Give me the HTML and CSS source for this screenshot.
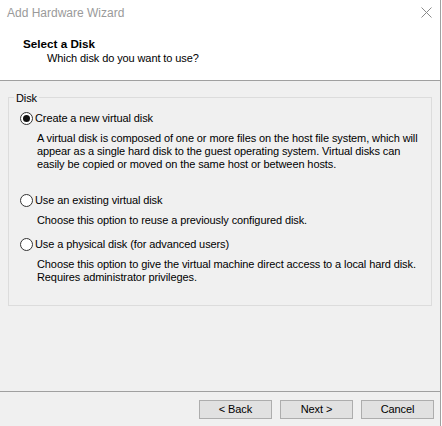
FILE: index.html
```html
<!DOCTYPE html>
<html>
<head>
<meta charset="utf-8">
<title>Add Hardware Wizard</title>
<link rel="stylesheet" href="styles.css">
</head>
<body>
<div class="window">
  <div class="top">
    <div class="titlebar">
      <span class="title">Add Hardware Wizard</span>
      <svg class="close" width="11" height="11" viewBox="0 0 11 11"><path d="M0.5 0.5L10.5 10.5M10.5 0.5L0.5 10.5" stroke="#8a8a8a" stroke-width="1" fill="none"/></svg>
    </div>
    <div class="header">
      <div class="h-title">Select a Disk</div>
      <div class="h-sub">Which disk do you want to use?</div>
    </div>
  </div>
  <div class="content">
    <div class="group">
      <div class="group-label">Disk</div>
      <div class="option option-first">
        <div class="opt-row"><span class="radio checked"></span><span>Create a new virtual disk</span></div>
        <div class="desc">A virtual disk is composed of one or more files on the host file system, which will<br>appear as a single hard disk to the guest operating system. Virtual disks can<br>easily be copied or moved on the same host or between hosts.</div>
      </div>
      <div class="option option-second">
        <div class="opt-row"><span class="radio"></span><span>Use an existing virtual disk</span></div>
        <div class="desc">Choose this option to reuse a previously configured disk.</div>
      </div>
      <div class="option option-third">
        <div class="opt-row"><span class="radio"></span><span>Use a physical disk (for advanced users)</span></div>
        <div class="desc">Choose this option to give the virtual machine direct access to a local hard disk.<br>Requires administrator privileges.</div>
      </div>
    </div>
  </div>
  <div class="footer">
    <button class="btn">&lt; Back</button>
    <button class="btn">Next &gt;</button>
    <button class="btn">Cancel</button>
  </div>
</div>
</body>
</html>
```
FILE: styles.css
```css
* { box-sizing: border-box; }
html, body { margin: 0; padding: 0; }
body {
  width: 442px;
  height: 426px;
  overflow: hidden;
  background: #ffffff;
}
.window {
  width: 441px;
  height: 426px;
  border-right: 1px solid #a0a0a0;
  display: flex;
  flex-direction: column;
  background: #f0f0f0;
  font-family: "Liberation Sans", Arial, sans-serif;
  font-size: 11px;
  letter-spacing: -0.1px;
  color: #000;
}
.top {
  flex: none;
  height: 81px;
  background: #ffffff;
  border-bottom: 1px solid #a0a0a0;
}
.titlebar {
  height: 30px;
  display: flex;
  justify-content: space-between;
  align-items: flex-start;
  padding: 6px 8px 0 7px;
}
.title {
  font-size: 12px;
  line-height: 14px;
  letter-spacing: 0;
  color: #9a9a9a;
}
.close { margin-top: 1px; display: block; }
.header { padding: 7px 0 0 23px; }
.h-title {
  font-weight: bold;
  font-size: 11.7px;
  line-height: 13px;
  letter-spacing: 0;
}
.h-sub {
  margin: 2px 0 0 24px;
  line-height: 13px;
}
.content {
  flex: 1;
  padding: 16px 8px 0;
}
.group {
  border: 1px solid #dcdcdc;
  padding: 0 0 21px 0;
  display: flex;
  flex-direction: column;
}
.group-label {
  align-self: flex-start;
  margin: -6px 0 0 5px;
  padding: 0 2px;
  background: #f0f0f0;
  line-height: 13px;
}
.option { margin-left: 11px; }
.option-first { margin-top: 7px; }
.option-second { margin-top: 23px; }
.option-third { margin-top: 11px; }
.opt-row {
  display: flex;
  align-items: center;
  gap: 2px;
  line-height: 13px;
}
.radio {
  flex: none;
  width: 13px;
  height: 13px;
  border-radius: 50%;
  border: 1px solid #333;
  background: #fff;
  display: grid;
  place-items: center;
}
.radio.checked::after {
  content: "";
  width: 7px;
  height: 7px;
  border-radius: 50%;
  background: #111;
}
.desc {
  margin: 7px 0 0 17px;
  line-height: 13px;
  white-space: nowrap;
}
.footer {
  flex: none;
  height: 35px;
  border-top: 1px solid #a0a0a0;
  padding: 8px 6px 0 0;
  display: flex;
  justify-content: flex-end;
  align-items: flex-start;
  gap: 8px;
}
.btn {
  width: 73px;
  height: 19px;
  padding: 0;
  background: #e1e1e1;
  border: 1px solid #adadad;
  border-radius: 0;
  font: inherit;
  letter-spacing: inherit;
  line-height: 17px;
  color: #000;
}
```
